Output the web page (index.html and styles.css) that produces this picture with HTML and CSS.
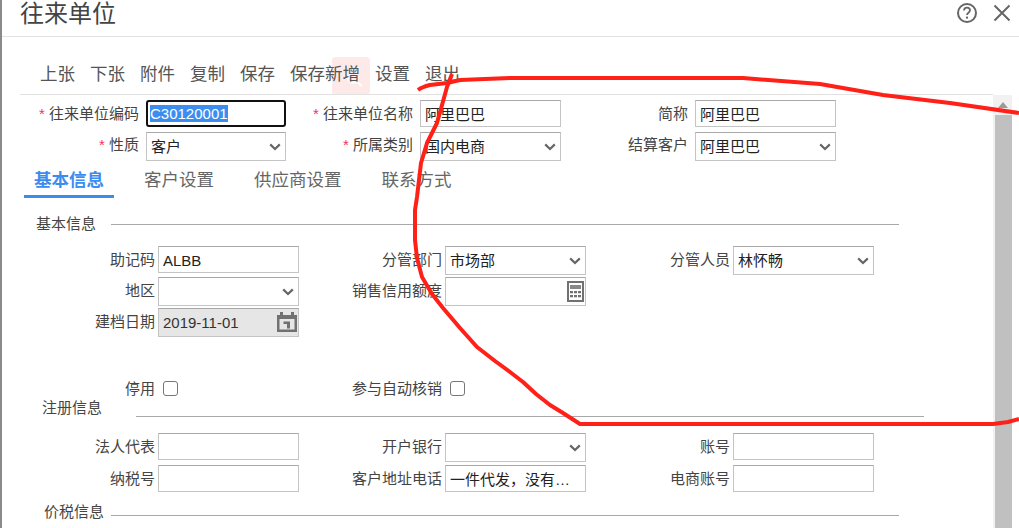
FILE: index.html
```html
<!DOCTYPE html>
<html lang="zh-CN">
<head>
<meta charset="utf-8">
<title>往来单位</title>
<link rel="stylesheet" href="styles.css">
</head>
<body>
<div class="dialog">
  <header class="titlebar">
    <h1 class="title">往来单位</h1>
    <div class="title-actions">
      <svg class="icon-help" viewBox="0 0 22 22" width="22" height="22"><circle cx="11" cy="11" r="9" fill="none" stroke="#666" stroke-width="2"/><path d="M8 8.6c0-1.8 1.3-2.9 3-2.9s3 1 3 2.6c0 2.4-3 2.4-3 4.7" fill="none" stroke="#666" stroke-width="1.8"/><rect x="10" y="14.6" width="2" height="2" fill="#666"/></svg>
      <svg class="icon-close" viewBox="0 0 18 18" width="18" height="18"><path d="M1.5 1.5L16.5 16.5M16.5 1.5L1.5 16.5" stroke="#666" stroke-width="2" fill="none"/></svg>
    </div>
  </header>
  <nav class="toolbar">
    <span class="tool">上张</span>
    <span class="tool">下张</span>
    <span class="tool">附件</span>
    <span class="tool">复制</span>
    <span class="tool">保存</span>
    <span class="tool">保存新增<svg class="hot" viewBox="0 0 38 38" width="38" height="38"><rect width="38" height="38" rx="4" fill="#fdeae8"/><circle cx="21" cy="21" r="5" fill="none" stroke="#fff" stroke-width="1.5"/><path d="M25 25l5 4" stroke="#fff" stroke-width="2"/></svg></span>
    <span class="tool">设置</span>
    <span class="tool">退出</span>
  </nav>
  <div class="body">
    <div class="content">
      <div class="grid-top">
        <div class="lab"><em>*</em> 往来单位编码</div>
        <div class="box focus"><span class="sel">C30120001</span></div>
        <div class="lab"><em>*</em> 往来单位名称</div>
        <div class="box">阿里巴巴</div>
        <div class="lab">简称</div>
        <div class="box">阿里巴巴</div>
        <div class="lab low"><em>*</em> 性质</div>
        <div class="box tall">客户<svg class="chev" viewBox="0 0 12 8"><path d="M1.2 1.4L6 6l4.8-4.6" fill="none" stroke="#666" stroke-width="2.2"/></svg></div>
        <div class="lab low"><em>*</em> 所属类别</div>
        <div class="box tall">国内电商<svg class="chev" viewBox="0 0 12 8"><path d="M1.2 1.4L6 6l4.8-4.6" fill="none" stroke="#666" stroke-width="2.2"/></svg></div>
        <div class="lab low">结算客户</div>
        <div class="box tall">阿里巴巴<svg class="chev" viewBox="0 0 12 8"><path d="M1.2 1.4L6 6l4.8-4.6" fill="none" stroke="#666" stroke-width="2.2"/></svg></div>
      </div>
      <div class="tabs">
        <span class="tab active">基本信息</span>
        <span class="tab">客户设置</span>
        <span class="tab">供应商设置</span>
        <span class="tab">联系方式</span>
      </div>

      <div class="section s-basic"><span class="s-name">基本信息</span><span class="s-line"></span></div>
      <div class="grid-form g-basic">
        <div class="lab">助记码</div>
        <div class="box">ALBB</div>
        <div class="lab">分管部门</div>
        <div class="box tall">市场部<svg class="chev" viewBox="0 0 12 8"><path d="M1.2 1.4L6 6l4.8-4.6" fill="none" stroke="#666" stroke-width="2.2"/></svg></div>
        <div class="lab">分管人员</div>
        <div class="box tall">林怀畅<svg class="chev" viewBox="0 0 12 8"><path d="M1.2 1.4L6 6l4.8-4.6" fill="none" stroke="#666" stroke-width="2.2"/></svg></div>

        <div class="lab">地区</div>
        <div class="box tall"><svg class="chev" viewBox="0 0 12 8"><path d="M1.2 1.4L6 6l4.8-4.6" fill="none" stroke="#666" stroke-width="2.2"/></svg></div>
        <div class="lab">销售信用额度</div>
        <div class="box tall"><svg class="calc" viewBox="0 0 17 21"><rect width="17" height="21" fill="#717171"/><rect x="2" y="2" width="13" height="17" fill="#fff"/><rect x="3" y="4" width="11" height="4" fill="#888"/><path d="M3 10h3v2.2H3zM7 10h3v2.2H7zM11 10h3v2.2h-3zM3 14h3v2.2H3zM7 14h3v2.2H7zM11 14h3v2.2h-3z" fill="#717171"/></svg></div>
        <div class="span2"></div>

        <div class="lab">建档日期</div>
        <div class="box tall off">2019-11-01<svg class="cal" viewBox="0 0 20 20"><path d="M0 3h3V0h3v3h8V0h3v3h3v17H0z" fill="#717171"/><rect x="2.5" y="7" width="15" height="10.5" fill="#e6e6e6"/><path d="M6.5 9.5h6.5v7h-3v-4.500H6.500z" fill="#717171"/></svg></div>
        <div class="span4"></div>
      </div>
      <div class="grid-form g-check">
        <div class="lab">停用</div>
        <div class="check-cell"><span class="check"></span></div>
        <div class="lab">参与自动核销</div>
        <div class="check-cell"><span class="check"></span></div>
      </div>

      <div class="section s-reg"><span class="s-name">注册信息</span><span class="s-line"></span></div>
      <div class="grid-form g-reg">
        <div class="lab">法人代表</div>
        <div class="box"></div>
        <div class="lab">开户银行</div>
        <div class="box tall"><svg class="chev" viewBox="0 0 12 8"><path d="M1.2 1.4L6 6l4.8-4.6" fill="none" stroke="#666" stroke-width="2.2"/></svg></div>
        <div class="lab">账号</div>
        <div class="box"></div>
        <div class="lab">纳税号</div>
        <div class="box"></div>
        <div class="lab">客户地址电话</div>
        <div class="box">一件代发，没有…</div>
        <div class="lab">电商账号</div>
        <div class="box"></div>
      </div>
      <div class="section s-tax"><span class="s-name">价税信息</span><span class="s-line"></span></div>
    </div>
    <div class="scrollbar"><span class="arrow"></span><span class="thumb"></span></div>
  </div>
</div>
<svg class="ink" viewBox="0 0 1019 528" width="1019" height="528"><path d="M418 90C422 87 426 86 430 85L447 83L460 80L510 78L743 78L820 84L883 95L950 103L1019 113" fill="none" stroke="#ff2017" stroke-width="4" stroke-linejoin="round"/><path d="M452 74L447 87L437 123L427 143L421 163L417 197L415 210L415 240L417 258L422 277L432 294L443 308L460 328L477 347L495 361L510 372L523 382L536 394L550 405L563 413L580 424L993 424L1008 422L1019 419" fill="none" stroke="#ff2017" stroke-width="4" stroke-linejoin="round"/></svg>
</body>
</html>
```
FILE: styles.css
```css
* { box-sizing: border-box; }
html, body { margin: 0; height: 100%; overflow: hidden; }
html { background: #fff; }
body { font-family: "Liberation Sans", "Noto Sans CJK SC", sans-serif; color: #333; }
.dialog { height: 528px; border-left: 2px solid #8a8a8a; display: flex; flex-direction: column; }
.titlebar { height: 37px; border-bottom: 1px solid #e2e2e2; display: flex; justify-content: space-between; padding: 0 8px 0 18px; flex: none; }
.title { margin: 0; font-size: 24px; font-weight: 400; line-height: 28px; color: #444; }
.title-actions { display: flex; align-items: flex-start; gap: 15px; padding-top: 2px; }
.icon-help { display: block; }
.icon-close { display: block; margin-top: 2px; }
.toolbar { height: 58px; margin: 0 26px 0 18px; border-bottom: 1px solid #e2e2e2; display: flex; gap: 15px; align-items: flex-end; padding: 0 0 7px 20px; flex: none; }
.tool { font-size: 17.5px; line-height: 26px; color: #555; position: relative; }
.hot { position: absolute; left: 42px; top: -4px; z-index: -1; }
.body { flex: 1; display: flex; min-height: 0; }
.content { flex: 1; min-width: 0; padding-top: 5px; font-size: 15px; }
.grid-top { display: grid; grid-template-columns: 144px 140px 134px 141px 134px 141px; grid-template-rows: 27px 29px; row-gap: 5px; }
.grid-form { display: grid; grid-template-columns: 156px 141px 146px 141px 147px 141px; }
.g-basic { grid-template-rows: 29px 29px 29px; row-gap: 2px; margin-top: 12px; }
.g-check { margin-top: 38px; height: 24px; align-items: center; }
.g-reg { grid-template-rows: 29px 27px; row-gap: 3px; margin-top: 15px; }
.lab { text-align: right; padding-right: 3px; font-size: 15px; line-height: 27px; color: #444; white-space: nowrap; }
.grid-top .lab { padding-right: 7px; }
.grid-top .lab.low { line-height: 25px; }
.lab em { font-style: normal; color: #f5325c; }
.box { position: relative; height: 27px; border: 1px solid #c4c4c4; border-top-color: #a8a8a8; font-size: 15px; line-height: 27px; padding-left: 4px; color: #222; white-space: nowrap; background: #fff; overflow: hidden; }
.box.tall { height: 29px; }
.box.focus { border: 2px solid #111; border-radius: 3px; line-height: 23px; padding-left: 2px; }
.sel { background: #3b8ef0; color: #fff; display: inline-block; line-height: 17px; }
.box.off { background: #e6e6e6; color: #333; }
.chev { position: absolute; right: 4px; top: 10px; width: 12px; height: 8px; }
.calc { position: absolute; right: 1px; top: 3px; width: 17px; height: 21px; }
.cal { position: absolute; right: 1px; top: 3px; width: 20px; height: 20px; }
.span2 { grid-column: span 2; }
.span4 { grid-column: span 4; }
.tabs { display: flex; gap: 20px; margin: 4px 0 0 22px; height: 33px; }
.tab { font-size: 17.5px; line-height: 30px; color: #666; padding: 0 10px; height: 33px; }
.tab.active { color: #3c8cf0; font-weight: 700; border-bottom: 3px solid #3c8cf0; }
.section { display: flex; white-space: nowrap; height: 20px; align-items: flex-start; }
.s-name { font-size: 15px; line-height: 20px; color: #444; }
.s-line { height: 1px; background: #a8a8a8; width: 788px; }
.s-basic { margin: 16px 0 0 34px; }
.s-basic .s-line { margin: 10px 0 0 15px; }
.s-reg { margin: -1px 0 0 40px; }
.s-reg .s-line { margin: 18px 0 0 34px; }
.s-tax { margin: 10px 0 0 42px; }
.s-tax .s-line { margin: 13px 0 0 7px; }
.check-cell { display: flex; align-items: center; padding-left: 5px; }
.check { width: 15px; height: 15px; border: 1px solid #777; border-radius: 3px; background: #fff; }
.scrollbar { width: 19px; margin-right: 7px; flex: none; background: #f1f1f1; display: flex; flex-direction: column; align-items: flex-end; }
.arrow { width: 0; height: 0; border: 5px solid transparent; border-bottom: 6px solid #9a9a9a; border-top: 0; margin: 7px 4px 7px 0; flex: none; }
.thumb { width: 17px; flex: 1; background: #c0c0c0; }
.ink { position: absolute; left: 0; top: 0; pointer-events: none; }
```
